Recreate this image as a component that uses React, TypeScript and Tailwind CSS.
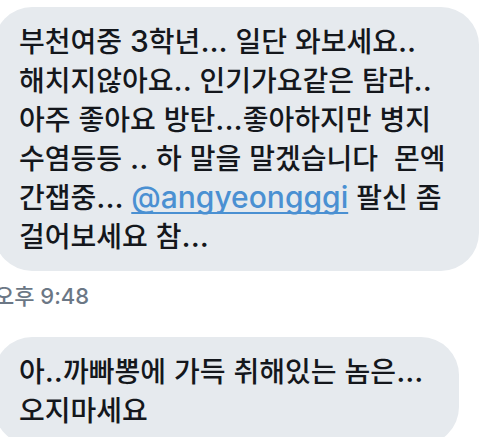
import type { ReactNode } from "react";

// Hangul is set a little smaller than the Latin letters, digits and dots around it.
function Line({ children }: { children: string }) {
  return children
    .split(/([가-힣]+)/)
    .filter(Boolean)
    .map((run, i) =>
      /[가-힣]/.test(run) ? (
        <span key={i}>{run}</span>
      ) : (
        <span key={i} className="text-[30px] leading-none">
          {run}
        </span>
      ),
    );
}

function Bubble({ className, children }: { className: string; children: ReactNode }) {
  return (
    <p
      className={`rounded-[38px] bg-[#e6eaee] pt-4 pb-[14px] pl-[25px] text-[28px] leading-[39px] font-medium whitespace-pre text-[#14171c] ${className}`}
    >
      {children}
    </p>
  );
}

export default function App() {
  return (
    <main
      lang="ko"
      className="h-screen overflow-hidden bg-white pt-[7px] font-[family-name:Inter,'Noto_Sans_CJK_KR',sans-serif]"
    >
      <div className="-ml-[6px]">
        <Bubble className="mr-[15px]">
          <Line>부천여중 3학년... 일단 와보세요..</Line>
          <br />
          <Line>해치지않아요.. 인기가요같은 탐라..</Line>
          <br />
          <Line>아주 좋아요 방탄...좋아하지만 병지</Line>
          <br />
          <Line>{"수염등등 .. 하 말을 말겠습니다  몬엑"}</Line>
          <br />
          <Line>{"간잽중... "}</Line>
          <a
            href="#angyeongggi"
            className="text-[30px] leading-none text-[#4a90d2] underline decoration-2 underline-offset-4 [text-decoration-skip-ink:none]"
          >
            @angyeongggi
          </a>
          <Line>{" 팔신 좀"}</Line>
          <br />
          <Line>걸어보세요 참...</Line>
        </Bubble>
        <time className="block pt-[11px] pb-[27px] text-[22px] leading-7 font-medium text-[#6b7785]">
          오후 9:48
        </time>
        <Bubble className="mr-[35px]">
          <Line>아..까빠뽕에 가득 취해있는 놈은...</Line>
          <br />
          <Line>오지마세요</Line>
        </Bubble>
      </div>
    </main>
  );
}
